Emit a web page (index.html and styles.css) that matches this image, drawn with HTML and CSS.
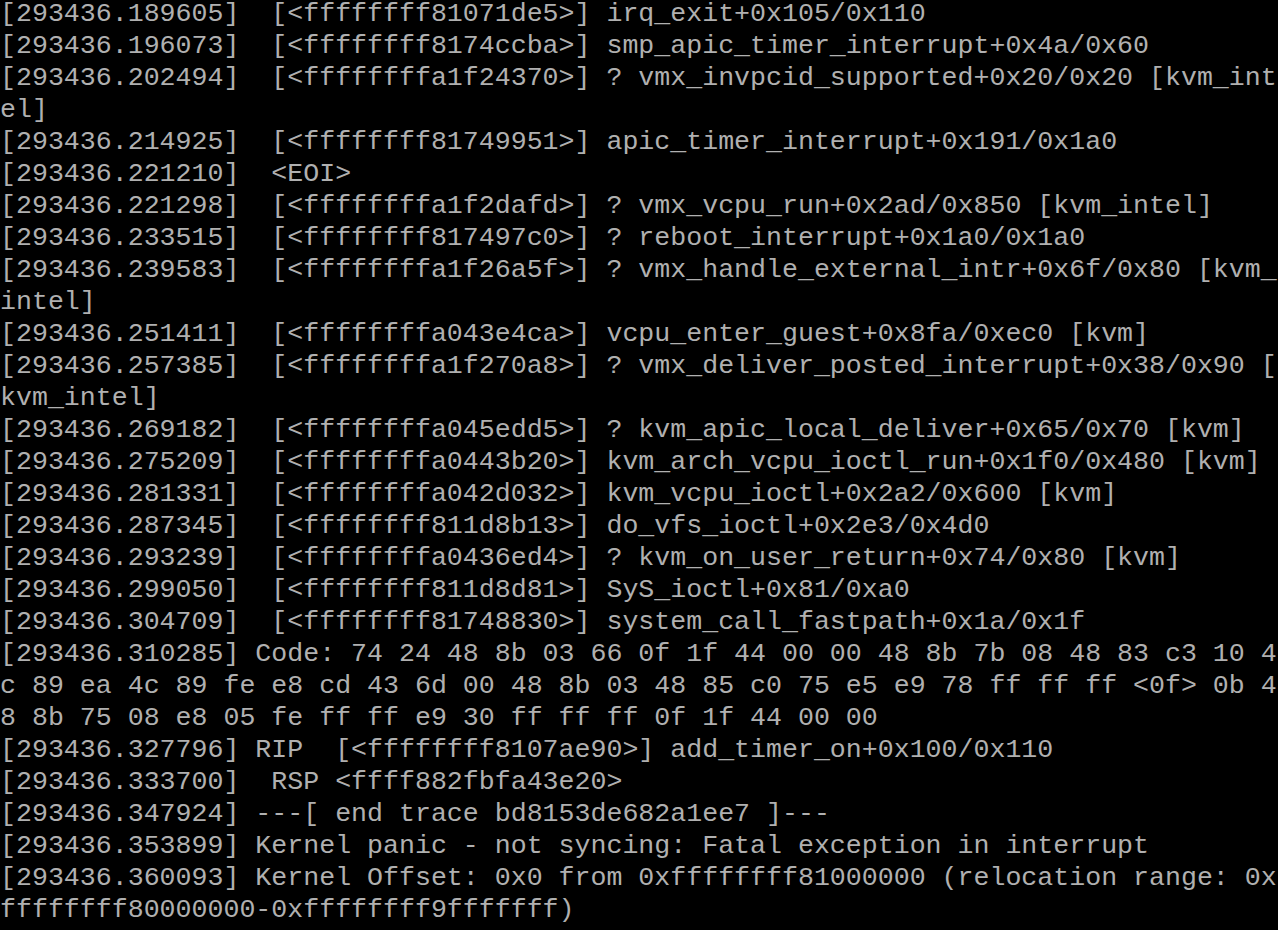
FILE: index.html
```html
<!DOCTYPE html>
<html>
<head>
<meta charset="utf-8">
<link rel="stylesheet" href="styles.css">
</head>
<body>
<div class="console">
<div class="line">[293436.189605]  [&lt;ffffffff81071de5&gt;] irq_exit+0x105/0x110</div>
<div class="line">[293436.196073]  [&lt;ffffffff8174ccba&gt;] smp_apic_timer_interrupt+0x4a/0x60</div>
<div class="line">[293436.202494]  [&lt;ffffffffa1f24370&gt;] ? vmx_invpcid_supported+0x20/0x20 [kvm_int</div>
<div class="line">el]</div>
<div class="line">[293436.214925]  [&lt;ffffffff81749951&gt;] apic_timer_interrupt+0x191/0x1a0</div>
<div class="line">[293436.221210]  &lt;EOI&gt;</div>
<div class="line">[293436.221298]  [&lt;ffffffffa1f2dafd&gt;] ? vmx_vcpu_run+0x2ad/0x850 [kvm_intel]</div>
<div class="line">[293436.233515]  [&lt;ffffffff817497c0&gt;] ? reboot_interrupt+0x1a0/0x1a0</div>
<div class="line">[293436.239583]  [&lt;ffffffffa1f26a5f&gt;] ? vmx_handle_external_intr+0x6f/0x80 [kvm_</div>
<div class="line">intel]</div>
<div class="line">[293436.251411]  [&lt;ffffffffa043e4ca&gt;] vcpu_enter_guest+0x8fa/0xec0 [kvm]</div>
<div class="line">[293436.257385]  [&lt;ffffffffa1f270a8&gt;] ? vmx_deliver_posted_interrupt+0x38/0x90 [</div>
<div class="line">kvm_intel]</div>
<div class="line">[293436.269182]  [&lt;ffffffffa045edd5&gt;] ? kvm_apic_local_deliver+0x65/0x70 [kvm]</div>
<div class="line">[293436.275209]  [&lt;ffffffffa0443b20&gt;] kvm_arch_vcpu_ioctl_run+0x1f0/0x480 [kvm]</div>
<div class="line">[293436.281331]  [&lt;ffffffffa042d032&gt;] kvm_vcpu_ioctl+0x2a2/0x600 [kvm]</div>
<div class="line">[293436.287345]  [&lt;ffffffff811d8b13&gt;] do_vfs_ioctl+0x2e3/0x4d0</div>
<div class="line">[293436.293239]  [&lt;ffffffffa0436ed4&gt;] ? kvm_on_user_return+0x74/0x80 [kvm]</div>
<div class="line">[293436.299050]  [&lt;ffffffff811d8d81&gt;] SyS_ioctl+0x81/0xa0</div>
<div class="line">[293436.304709]  [&lt;ffffffff81748830&gt;] system_call_fastpath+0x1a/0x1f</div>
<div class="line">[293436.310285] Code: 74 24 48 8b 03 66 0f 1f 44 00 00 48 8b 7b 08 48 83 c3 10 4</div>
<div class="line">c 89 ea 4c 89 fe e8 cd 43 6d 00 48 8b 03 48 85 c0 75 e5 e9 78 ff ff ff &lt;0f&gt; 0b 4</div>
<div class="line">8 8b 75 08 e8 05 fe ff ff e9 30 ff ff ff 0f 1f 44 00 00</div>
<div class="line">[293436.327796] RIP  [&lt;ffffffff8107ae90&gt;] add_timer_on+0x100/0x110</div>
<div class="line">[293436.333700]  RSP &lt;ffff882fbfa43e20&gt;</div>
<div class="line">[293436.347924] ---[ end trace bd8153de682a1ee7 ]---</div>
<div class="line">[293436.353899] Kernel panic - not syncing: Fatal exception in interrupt</div>
<div class="line">[293436.360093] Kernel Offset: 0x0 from 0xffffffff81000000 (relocation range: 0x</div>
<div class="line">ffffffff80000000-0xffffffff9fffffff)</div>
</div>
</body>
</html>
```
FILE: styles.css
```css
html, body {
  margin: 0;
  padding: 0;
  background: #000;
  height: 100%;
  overflow: hidden;
}
.console {
  padding: 0;
  margin-top: -2px;
  color: #b0b0b0;
  font-family: "Liberation Mono", "DejaVu Sans Mono", monospace;
  font-size: 26.6px;
  line-height: 32px;
}
.line {
  white-space: pre;
  height: 32px;
}
```
